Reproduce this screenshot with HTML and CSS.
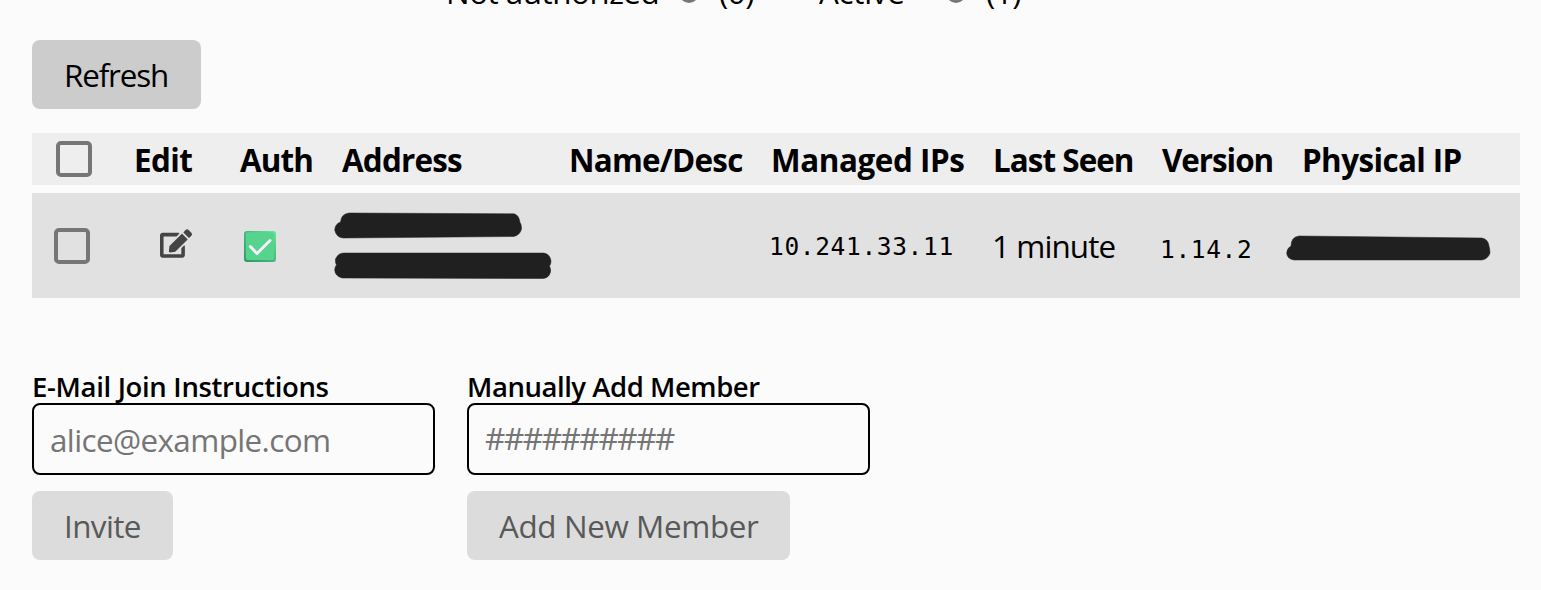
FILE: index.html
```
<!DOCTYPE html>
<html lang="en">
<head>
<meta charset="utf-8">
<title>Members</title>
<link rel="stylesheet" href="styles.css">
</head>
<body>
<div class="filters">
  <span class="filter-name not-auth">Not authorized</span><i class="dot"></i><span class="count">(0)</span>
  <span class="filter-name active">Active</span><i class="dot dot-active"></i><span class="count">(1)</span>
</div>
<main>
  <button class="btn refresh"><span>Refresh</span></button>
  <section class="members">
    <div class="row head">
      <div class="check-cell"><span class="checkbox"></span></div>
      <div><span class="h-edit">Edit</span></div>
      <div><span class="h-auth">Auth</span></div>
      <div class="pad-address"><span class="h-address">Address</span></div>
      <div><span class="h-name">Name/Desc</span></div>
      <div class="pad-managed"><span class="h-managed">Managed IPs</span></div>
      <div><span class="h-seen">Last Seen</span></div>
      <div class="pad-version"><span class="h-version">Version</span></div>
      <div class="pad-physical"><span class="h-physical">Physical IP</span></div>
    </div>
    <div class="row member">
      <div class="check-cell"><span class="checkbox"></span></div>
      <div class="edit-cell">
        <svg class="edit-icon" viewBox="0 0 576 512"><path d="M402.6 83.2l90.2 90.2c3.8 3.8 3.8 10 0 13.8L274.4 405.6l-92.8 10.3c-12.4 1.4-22.9-9.1-21.5-21.5l10.3-92.8L388.8 83.2c3.8-3.8 10-3.8 13.8 0zm162-22.9l-48.8-48.8c-15.2-15.2-39.9-15.2-55.2 0l-35.4 35.4c-3.8 3.8-3.8 10 0 13.8l90.2 90.2c3.8 3.8 10 3.8 13.8 0l35.4-35.4c15.2-15.3 15.2-40 0-55.2zM384 346.2V448H64V128h229.8c3.2 0 6.2-1.3 8.5-3.5l40-40c7.6-7.6 2.2-20.5-8.5-20.5H48C21.5 64 0 85.5 0 112v352c0 26.5 21.5 48 48 48h352c26.5 0 48-21.5 48-48V306.2c0-10.7-12.9-16-20.5-8.5l-40 40c-2.2 2.3-3.5 5.3-3.5 8.5z"/></svg>
      </div>
      <div class="auth-cell">
        <svg class="auth-icon" viewBox="0 0 32 31">
          <defs>
            <linearGradient id="edge" x1="0" y1="1" x2="1" y2="0"><stop offset="0" stop-color="#319466"/><stop offset=".5" stop-color="#45b87a"/><stop offset="1" stop-color="#62ed98"/></linearGradient>
          </defs>
          <rect width="32" height="31" rx="3" fill="url(#edge)"/>
          <rect x="1.8" y="1.3" width="28.4" height="27.7" rx="2" fill="#56d38d"/>
          <path d="M6.3 15.5l6.7 7L26 9.5" fill="none" stroke="#f5effb" stroke-width="3" stroke-linecap="round" stroke-linejoin="round"/>
        </svg>
      </div>
      <div class="address-cell">
        <svg class="mark mark-a" viewBox="0 0 188 27"><path d="M15 1L180 1.8Q185 3 186 10.5Q187.5 12 187.5 17Q186 23 180 24.5L9 26Q2 25 .7 18Q1 12 6.5 10Q7 2 15 1Z"/></svg>
        <svg class="mark mark-b" viewBox="0 0 218 28"><path d="M10 1H210Q216 2 217 9Q217 12 215.5 14Q217 17 216.5 20Q215 26 209 26.5L8 26Q1 24 .7 18Q1 14 2.5 13Q1 11 1.5 7Q4 1 10 1Z"/></svg>
      </div>
      <div></div>
      <div><span class="mono ip">10.241.33.11</span></div>
      <div><span class="seen">1 minute</span></div>
      <div><span class="mono version">1.14.2</span></div>
      <div><svg class="mark mark-c" viewBox="0 0 205 26"><path d="M13 1L196 3Q202 4 203 11Q204 14 204 18Q202 24 196 25H8Q1 24 .7 18Q1 13 5 11Q5 2 13 1Z"/></svg></div>
    </div>
  </section>
  <section class="forms">
    <form class="form">
      <label class="l-mail" for="mail">E-Mail Join Instructions</label>
      <input id="mail" class="mail" type="text" placeholder="alice@example.com">
      <button class="btn muted invite" type="button"><span>Invite</span></button>
    </form>
    <form class="form">
      <label class="l-member" for="member">Manually Add Member</label>
      <input id="member" class="hashes" type="text" placeholder="##########">
      <button class="btn muted add" type="button"><span>Add New Member</span></button>
    </form>
  </section>
</main>
</body>
</html>
```
FILE: styles.css
```
* { box-sizing: border-box; }
body {
  margin: 0;
  height: 590px;
  overflow: hidden;
  background: #fbfbfb;
  color: #000;
  font: 31.4px "Open Sans", "Noto Sans", sans-serif;
}
span, label { white-space: nowrap; }
.filters {
  display: flex;
  align-items: center;
  height: 40px;
  margin-top: -29px;
  padding-left: 446px;
}
.filter-name.not-auth { width: 233px; letter-spacing: -.5px; }
.filter-name.active { width: 127px; letter-spacing: -.3px; }
.dot { width: 20px; height: 20px; margin-right: 20px; border-radius: 50%; background: #777; flex: none; position: relative; top: 2px; }
.count { width: 100px; letter-spacing: -.5px; }
main { padding: 29px 21px 0 32px; }
.btn {
  display: flex;
  align-items: center;
  height: 69px;
  border: 0;
  border-radius: 8px;
  padding: 0 32px;
  background: #ccc;
  color: #000;
  font: inherit;
}
.refresh { width: 169px; letter-spacing: -1.15px; }
.members { margin-top: 24px; display: grid; gap: 8px; }
.row {
  display: grid;
  grid-template-columns: 102px 106px 94px 236px 199px 224px 167px 126px 234px;
  align-items: center;
}
.row > div { display: flex; align-items: center; }
.head { height: 52px; background: #eee; font-weight: 700; }
.member { height: 105px; background: #e1e1e1; }
.checkbox { width: 36px; height: 36px; border: 4px solid #767676; border-radius: 5px; }
.head .check-cell { padding-left: 24px; }
.member .check-cell { padding-left: 22px; }
.row > .pad-address { padding-left: 8px; }
.row > .pad-managed { padding-left: 2px; }
.row > .pad-version { padding-left: 2px; }
.row > .pad-physical { padding-left: 16px; }
.h-edit { letter-spacing: -.6px; }
.h-auth { letter-spacing: -.9px; }
.h-address { letter-spacing: -.8px; }
.h-name { letter-spacing: -.75px; margin-left: -1px; }
.h-managed { letter-spacing: -.42px; }
.h-seen { letter-spacing: -.95px; }
.h-version { letter-spacing: -1.05px; }
.h-physical { letter-spacing: -.6px; }
.edit-cell { padding: 0 0 5px 26px; }
.edit-icon { width: 32px; height: 29px; fill: #444; }
.auth-cell { padding-left: 4px; padding-top: 2px; }
.auth-icon { width: 32px; height: 31px; }
.row > .address-cell { flex-direction: column; align-items: flex-start; gap: 13px; padding-top: 1px; }
.mark { display: block; fill: #202020; stroke: #202020; stroke-width: .5; }
.mark-a { width: 188px; height: 27px; }
.mark-b { width: 218px; height: 28px; }
.mark-c { width: 205px; height: 26px; margin-top: 4px; }
.mono { font: 24.5px "DejaVu Sans Mono", monospace; letter-spacing: .65px; }
.ip { padding-top: 2px; }
.version { padding-top: 7px; }
.seen { letter-spacing: -.9px; margin-left: -1px; }
.forms { display: flex; gap: 32px; margin-top: 73px; }
.form { width: 403px; display: flex; flex-direction: column; align-items: flex-start; }
label { font-size: 27.5px; font-weight: 600; line-height: 32px; height: 32px; }
.l-mail { letter-spacing: -.33px; }
.l-member { letter-spacing: -.45px; }
input {
  width: 403px;
  height: 72px;
  margin-bottom: 16px;
  border: 2px solid #000;
  border-radius: 8px;
  padding: 1px 16px 0;
  background: transparent;
  font: inherit;
}
input::placeholder { color: #757575; opacity: 1; }
.mail { letter-spacing: -.6px; }
.hashes { padding: 0 16px 3px; letter-spacing: -1.38px; }
.muted { background: #dcdcdc; color: #595959; }
.invite { width: 141px; letter-spacing: -.6px; }
.add { width: 323px; letter-spacing: -.38px; }
```
